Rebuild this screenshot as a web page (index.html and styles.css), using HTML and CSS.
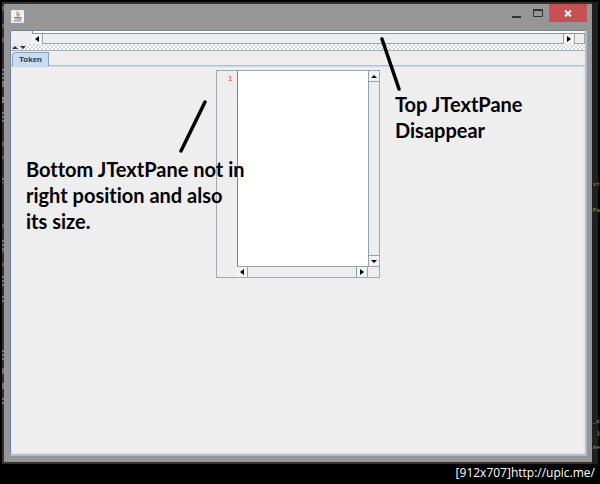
FILE: index.html
```
<!DOCTYPE html>
<html lang="en">

<head>
    <meta charset="UTF-8">
    <meta name="viewport" content="width=device-width, initial-scale=1.0">
    <title>Token</title>
    <link rel="stylesheet" href="styles.css">
</head>

<body>
    <div class="desktop">
        <div class="window">
            <header class="title_bar">
                <svg class="java_icon" viewBox="0 0 13 13" width="13" height="13">
                    <rect width="13" height="13" rx="1" fill="#f1f1f1" />
                    <path d="M7 1C4 3.500 8 4 6 6.500M9 3C6.500 4.500 8.500 5 7 6.500" fill="none" stroke="#e08a48" stroke-width="1.300" />
                    <path d="M3 7.500h6M4 9h4.500M2.500 11h8M9 7.500c2 0 1 1.500-.5 2" fill="none" stroke="#6f8aa5" stroke-width="1.200" />
                </svg>
                <div class="window_buttons">
                    <button class="min" aria-label="Minimize">
                        <svg viewBox="0 0 10 9" width="10" height="9"><path d="M1 8h9" stroke="#333" stroke-width="2" /></svg>
                    </button>
                    <button class="max" aria-label="Maximize">
                        <svg viewBox="0 0 10 8" width="10" height="8"><path d="M.5.5h9v7h-9zM0 1.500h10" fill="none" stroke="#333" /></svg>
                    </button>
                    <button class="close" aria-label="Close">
                        <svg viewBox="0 0 8 7" width="8" height="7"><path d="M1 .5l6 6M7 .5l-6 6" stroke="#fff" stroke-width="2" /></svg>
                    </button>
                </div>
            </header>
            <main class="content">
                <section class="top_pane">
                    <div class="strip"></div>
                    <div class="scroll_row">
                        <button class="arrow" aria-label="Scroll left"><svg viewBox="0 0 4 6" width="4" height="6"><path d="M4 0v6L0 3z" /></svg></button>
                        <div class="track"></div>
                        <button class="arrow" aria-label="Scroll right"><svg viewBox="0 0 4 6" width="4" height="6"><path d="M0 0v6l4-3z" /></svg></button>
                        <div class="corner"></div>
                    </div>
                </section>
                <div class="divider">
                    <button aria-label="Collapse"><svg viewBox="0 0 6 3" width="6" height="3"><path d="M0 3h6L3 0z" fill="#333" /></svg></button>
                    <button aria-label="Expand"><svg viewBox="0 0 6 3" width="6" height="3"><path d="M0 0h6L3 3z" fill="#333" /></svg></button>
                </div>
                <div class="tabs">
                    <button class="tab">Token</button>
                </div>
                <section class="bottom_pane">
                    <div class="editor">
                        <div class="line_numbers">1</div>
                        <textarea class="text" aria-label="Token text"></textarea>
                        <div class="scroll_col">
                            <button class="arrow" aria-label="Scroll up"><svg viewBox="0 0 6 3" width="6" height="3"><path d="M0 3h6L3 0z" /></svg></button>
                            <div class="track"></div>
                            <button class="arrow" aria-label="Scroll down"><svg viewBox="0 0 6 3" width="6" height="3"><path d="M0 0h6L3 3z" /></svg></button>
                        </div>
                        <div class="scroll_row">
                            <button class="arrow" aria-label="Scroll left"><svg viewBox="0 0 4 6" width="4" height="6"><path d="M4 0v6L0 3z" /></svg></button>
                            <div class="track"></div>
                            <button class="arrow" aria-label="Scroll right"><svg viewBox="0 0 4 6" width="4" height="6"><path d="M0 0v6l4-3z" /></svg></button>
                        </div>
                    </div>
                </section>
            </main>
        </div>
        <!-- code editor showing behind the window -->
        <div class="behind">
            <span class="code code_1">xt</span>
            <span class="code code_2">Pa</span>
            <span class="code code_3">_c</span>
            <span class="code code_4">)</span>
            <span class="code code_5">me</span>
        </div>
        <svg class="behind_left" viewBox="0 0 3 420" width="3" height="420">
            <path d="M2 6v5M2 24v4M2 38v4M2 142v4M2 156v3M2 224v4M2 250v3M2 263v3" stroke="#888" stroke-width="1" />
            <path d="M2 69v14M2 97v6M2 112v10M2 178v5M2 240v12M2 276v11M2 296v7M2 350v10M2 398v8" stroke="#77707f" stroke-width="2" stroke-dasharray="2 2" />
            <path d="M2 82v5M2 97v5M2 368v6M2 383v6" stroke="#c5b58c" stroke-width="1" />
        </svg>
    </div>
    <footer class="caption">[912x707]<a href="http://upic.me/">http://upic.me/</a></footer>

    <p class="note note_bottom">Bottom JTextPane not in<br>right position and also<br>its size.</p>
    <p class="note note_top">Top JTextPane<br>Disappear</p>
    <svg class="pointers" viewBox="0 0 230 120" width="230" height="120">
        <path d="M31 66L7 115M208 3L225 53" fill="none" stroke="#000" stroke-width="3.500" stroke-linecap="round" />
    </svg>
</body>

</html>
```
FILE: styles.css
```
* {
    box-sizing: border-box;
}

body {
    margin: 0;
    min-height: 100vh;
    display: flex;
    flex-direction: column;
    position: relative;
    background: #000;
    font-family: "Liberation Sans", Arial, sans-serif;
}

button {
    display: flex;
    align-items: center;
    justify-content: center;
    margin: 0;
    padding: 0;
    border: 0;
    background: none;
}

.desktop {
    flex: 1;
    display: flex;
    position: relative;
    padding: 2px 2px 0 2px;
}

.window {
    flex: 1;
    display: flex;
    flex-direction: column;
    border: 2px solid #333;
    border-right: 0;
    padding: 0 5px 6px 6px;
    background: #969696;
}

.behind {
    width: 6px;
    background: #202020;
    position: relative;
}

.behind_left {
    position: absolute;
    left: 1px;
    top: 0;
}

.code {
    position: absolute;
    right: -2px;
    font: 6px/10px "Liberation Mono", monospace;
    color: #87a84e;
}

.code_1 {
    top: 178px;
}

.code_2 {
    top: 204px;
}

.code_3 {
    top: 415px;
    color: #8fc3c9;
}

.code_4 {
    top: 427px;
    color: #ccc;
}

.code_5 {
    top: 441px;
}

/* title bar */
.title_bar {
    height: 26px;
    display: flex;
    justify-content: space-between;
}

.java_icon {
    margin-top: 6px;
    margin-left: 1px;
}

.window_buttons {
    display: flex;
    height: 18px;
}

.min,
.max {
    width: 22px;
}

.close {
    width: 38px;
    background: #c75050;
}

/* split pane */
.content {
    flex: 1;
    display: flex;
    flex-direction: column;
    border: solid #b2bdcb;
    border-width: 1px 2px 2px 1px;
    border-top-color: #77818a;
    border-left-color: #6f83b3;
    background: #eee;
}

.top_pane {
    padding-left: 21px;
}

.strip {
    height: 3px;
    border-left: 1px solid #8a97a0;
    border-bottom: 1px solid #8a97a0;
    background: #fff;
}

.scroll_row,
.scroll_col {
    display: flex;
    background: #eee;
}

.scroll_row {
    height: 10px;
    border-bottom: 1px solid #9aa5ad;
}

.scroll_col {
    flex-direction: column;
    border-left: 1px solid #8fa3b3;
}

.track {
    flex: 1;
    background: #ebeef0;
}

.arrow {
    width: 10px;
    height: 10px;
    background: #f3f3f3;
}

.scroll_row .track {
    border: solid #8fa3b3;
    border-width: 0 1px;
}

.scroll_col .track {
    border: solid #8fa3b3;
    border-width: 1px 0;
}

.corner {
    width: 11px;
    border: solid #9aa5ad;
    border-width: 0 1px;
}

.divider {
    height: 7px;
    display: flex;
    gap: 2px;
    padding-left: 1px;
    border-bottom: 1px solid #a5adb5;
    background: #f7f7f7 conic-gradient(#d3dae0 25%, #fff 0 50%, #d3dae0 0 75%, #fff 0) 0 0 / 4px 4px;
}

.divider button {
    width: 6px;
}

.tabs {
    height: 15px;
    padding: 1px 1px 0;
    border-bottom: 1px solid #b0c0d8;
}

.tab {
    height: 14px;
    padding: 0 6px;
    border: 1px solid #8ba0bb;
    border-bottom: 0;
    border-top-left-radius: 4px;
    background: #c8ddf2;
    color: #333;
    font: bold 8px/12px "Liberation Sans", Arial, sans-serif;
}

.bottom_pane {
    flex: 1;
    display: flex;
    justify-content: center;
    align-items: flex-start;
    padding: 3px 0 0;
    border: solid #e1e9f3;
    border-width: 1px 2px 2px 1px;
    border-top-color: #c8d6ea;
}

/* editor with line numbers */
.editor {
    display: grid;
    grid-template-columns: 20px 131px 11px;
    grid-template-rows: 196px 10px;
    border: 1px solid #a0a9af;
}

.line_numbers {
    padding: 3px 4px 0 0;
    text-align: right;
    font: 8px/10px "Liberation Sans", Arial, sans-serif;
    color: #f03a3a;
}

.text {
    margin: 0;
    padding: 2px;
    border: 0;
    border-left: 1px solid #77818a;
    border-bottom: 1px solid #9aa5ad;
    border-radius: 0;
    resize: none;
    background: #fff;
}

.editor .scroll_row {
    grid-column: 2;
    border-bottom: 0;
    border-right: 1px solid #9aa5ad;
}

.editor .scroll_col {
    border-bottom: 1px solid #9aa5ad;
}

/* annotations */
.note {
    position: absolute;
    margin: 0;
    white-space: nowrap;
    font: bold 20px/26px Lato, sans-serif;
    font-variant-ligatures: none;
    color: #000;
}

.note_bottom {
    left: 26px;
    top: 156px;
}

.note_top {
    left: 395px;
    top: 91px;
}

.pointers {
    position: absolute;
    left: 174px;
    top: 36px;
}

.caption {
    height: 20px;
    padding-right: 5px;
    text-align: right;
    font: 12px/18px "Open Sans", sans-serif;
    color: #fff;
}

.caption a {
    color: inherit;
    text-decoration: none;
}
```
